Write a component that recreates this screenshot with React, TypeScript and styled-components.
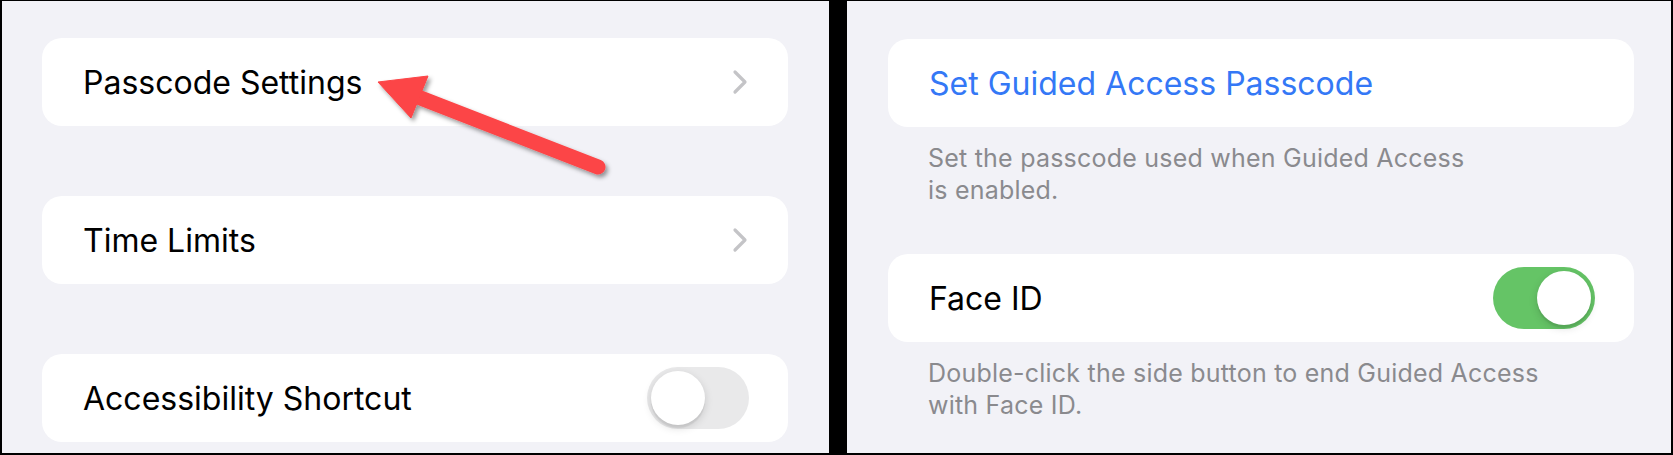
import React from "react";
import styled, { createGlobalStyle } from "styled-components";

const Global = createGlobalStyle`
  html, body { margin: 0; padding: 0; background: #000; }
  body {
    font-family: Inter, "Noto Sans", sans-serif;
    -webkit-font-smoothing: antialiased;
  }
`;

const Frame = styled.div`
  position: relative;
  width: 1673px;
  height: 455px;
  box-sizing: border-box;
  background: #000;
  padding: 1px 2px 2px 2px;
  display: grid;
  grid-template-columns: 827px 824px;
  column-gap: 18px;
`;

const Panel = styled.div<{ $side: "left" | "right" }>`
  background: #f2f2f7;
  overflow: hidden;
  display: flex;
  flex-direction: column;
  box-sizing: border-box;
  padding: ${(p) => (p.$side === "left" ? "37px 0 0 40px" : "38px 0 0 41px")};
  gap: ${(p) => (p.$side === "left" ? "70px" : "0")};
`;

const Card = styled.div`
  width: 746px;
  height: 88px;
  flex: none;
  box-sizing: border-box;
  background: #fff;
  border-radius: 20px;
  display: flex;
  align-items: center;
  justify-content: space-between;
  padding: 0 39px 0 41px;
`;

const Label = styled.span<{ $tint?: boolean }>`
  font-size: 32px;
  letter-spacing: 0;
  color: ${(p) => (p.$tint ? "#3478f6" : "#000")};
  white-space: nowrap;
`;

const Footer = styled.p<{ $gapAfter?: number }>`
  margin: 15px 0 ${(p) => p.$gapAfter ?? 0}px 0;
  padding: 0 0 0 40px;
  font-size: 25px;
  line-height: 32px;
  letter-spacing: 0.22px;
  color: #8a8a8e;
  white-space: nowrap;
`;

const Chevron = styled.svg`
  width: 16px;
  height: 26px;
  margin-right: 1px;
  flex: none;
`;

const Track = styled.div<{ $on: boolean }>`
  width: 102px;
  height: 62px;
  flex: none;
  box-sizing: border-box;
  border-radius: 31px;
  padding: 0 4px;
  display: flex;
  align-items: center;
  justify-content: ${(p) => (p.$on ? "flex-end" : "flex-start")};
  background: ${(p) => (p.$on ? "#65c466" : "#e9e9ea")};
`;

const Knob = styled.div`
  width: 54px;
  height: 54px;
  border-radius: 50%;
  background: #fff;
  box-shadow: 0 3px 8px rgba(0, 0, 0, 0.15), 0 3px 1px rgba(0, 0, 0, 0.06);
`;

const Annotation = styled.svg`
  position: absolute;
  left: 0;
  top: 0;
  width: 1673px;
  height: 455px;
  pointer-events: none;
`;

const ChevronIcon = () => (
  <Chevron viewBox="0 0 16 26">
    <path
      d="M3 3 L13 13 L3 23"
      fill="none"
      stroke="#c4c4c7"
      strokeWidth="3.2"
      strokeLinecap="round"
      strokeLinejoin="round"
    />
  </Chevron>
);

const Toggle = ({ on }: { on: boolean }) => (
  <Track $on={on}>
    <Knob />
  </Track>
);

export default function App() {
  return (
    <>
      <Global />
      <Frame>
        <Panel $side="left">
          <Card>
            <Label>Passcode Settings</Label>
            <ChevronIcon />
          </Card>
          <Card>
            <Label>Time Limits</Label>
            <ChevronIcon />
          </Card>
          <Card>
            <Label>Accessibility Shortcut</Label>
            <Toggle on={false} />
          </Card>
        </Panel>
        <Panel $side="right">
          <Card>
            <Label $tint>Set Guided Access Passcode</Label>
          </Card>
          <Footer $gapAfter={48}>
            Set the passcode used when Guided Access
            <br />
            is enabled.
          </Footer>
          <Card>
            <Label>Face ID</Label>
            <Toggle on />
          </Card>
          <Footer>
            Double-click the side button to end Guided Access
            <br />
            with Face ID.
          </Footer>
        </Panel>
        <Annotation viewBox="0 0 1673 455">
          <defs>
            <filter id="arrowShadow" x="-20%" y="-20%" width="140%" height="160%">
              <feDropShadow dx="2.5" dy="3" stdDeviation="2.2" floodColor="#000" floodOpacity="0.4" />
            </filter>
          </defs>
          <g filter="url(#arrowShadow)" fill="#fc4446" stroke="#fc4446">
            <line x1="598" y1="167" x2="418" y2="97" strokeWidth="15" strokeLinecap="round" />
            <polygon points="378,82 428,76 411,118" strokeWidth="1" strokeLinejoin="round" />
          </g>
        </Annotation>
      </Frame>
    </>
  );
}
